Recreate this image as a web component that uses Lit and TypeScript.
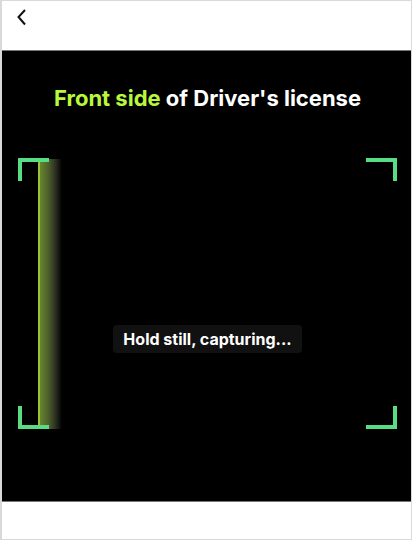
import { LitElement, html, css } from "lit";
import { customElement, property } from "lit/decorators.js";

@customElement("capture-frame")
class CaptureFrame extends LitElement {
  @property() message = "";

  static styles = css`
    :host {
      display: grid;
      grid-template-columns: 1fr 1fr;
      grid-template-rows: 1fr auto 1fr;
      position: relative;
      height: 271px;
      box-sizing: border-box;
    }
    .corner {
      position: relative;
      box-sizing: border-box;
      width: 31px;
      height: 23px;
      border: 0 solid #58dc84;
    }
    .top-left {
      border-top-width: 4px;
      border-left-width: 4px;
      border-top-left-radius: 1px;
    }
    .top-right {
      border-top-width: 4px;
      border-right-width: 4px;
      border-top-right-radius: 1px;
      justify-self: end;
    }
    .bottom-left {
      border-bottom-width: 4px;
      border-left-width: 4px;
      align-self: end;
    }
    .bottom-right {
      border-bottom-width: 4px;
      border-right-width: 4px;
      justify-self: end;
      align-self: end;
    }
    .message {
      grid-column: 1 / -1;
      justify-self: center;
      margin-top: 90px;
      padding: 0 10px;
      border-radius: 4px;
      background: #111;
      color: #fff;
      font-size: 16px;
      font-weight: 700;
      line-height: 28px;
      white-space: nowrap;
    }
    .beam {
      position: absolute;
      top: 1px;
      bottom: 0;
      left: 20px;
      width: 24px;
      box-sizing: border-box;
      border-left: 2px solid #98c43c;
      background: linear-gradient(to right, #68862c, #4c5c2c 40%, #26281f 75%, #000);
    }
  `;

  render() {
    return html`
      <div class="beam"></div>
      <span class="corner top-left"></span>
      <span class="corner top-right"></span>
      <div class="message" role="status">${this.message}</div>
      <span class="corner bottom-left"></span>
      <span class="corner bottom-right"></span>
    `;
  }
}

@customElement("app-root")
class AppRoot extends LitElement {
  static styles = css`
    :host {
      display: flex;
      flex-direction: column;
      box-sizing: border-box;
      min-height: 100vh;
      margin-right: 1px;
      border: 1px solid #d9d9d9;
      border-left-width: 2px;
      background: #fff;
      font-family: Inter, "Liberation Sans", sans-serif;
    }
    header {
      display: flex;
      align-items: flex-start;
      height: 49px;
      padding: 8px 12px 0;
      box-sizing: border-box;
    }
    .back {
      display: flex;
      padding: 0;
      border: 0;
      background: none;
      color: #111;
      cursor: pointer;
    }
    main {
      box-sizing: border-box;
      padding: 32px 14px 72px 16px;
      border: 1px solid #777;
      border-width: 1px 0;
      background: #000;
    }
    h1 {
      margin: 0 0 45px;
      color: #fff;
      font-size: 22px;
      font-weight: 700;
      line-height: 30px;
      text-align: center;
      white-space: nowrap;
    }
    .side {
      color: #b9f73e;
    }
  `;

  render() {
    return html`
      <header>
        <button class="back" aria-label="Back">
          <svg width="16" height="18" viewBox="0 0 16 18" fill="none" stroke="currentColor" stroke-width="2">
            <path d="M11 1 L4.5 8 L11 15.5" />
          </svg>
        </button>
      </header>
      <main>
        <h1><span class="side">Front side</span> of Driver's license</h1>
        <capture-frame message="Hold still, capturing..."></capture-frame>
      </main>
    `;
  }
}
